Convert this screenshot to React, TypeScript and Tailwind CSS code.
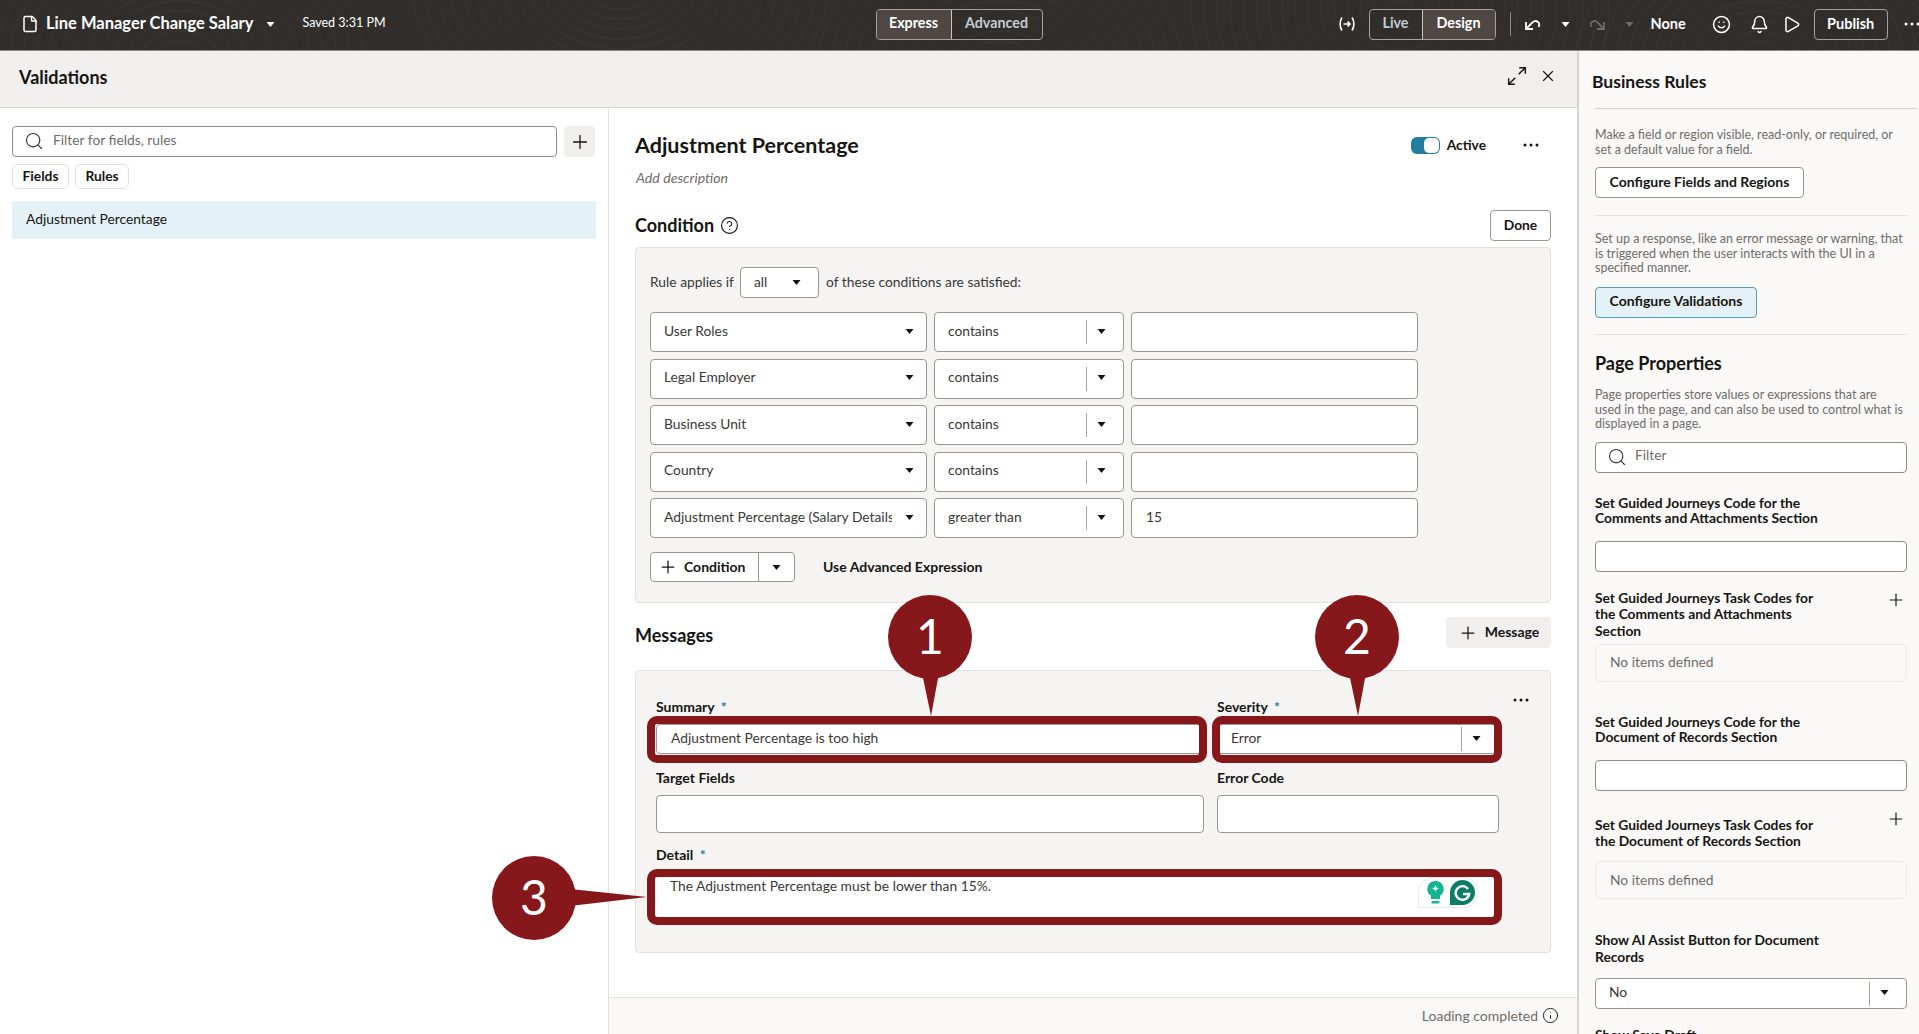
import { Search, Plus, X, File, Smile, Bell, Play, CircleHelp, Info } from 'lucide-react';

const conditionRows = [
  { field: 'User Roles', op: 'contains', value: '' },
  { field: 'Legal Employer', op: 'contains', value: '' },
  { field: 'Business Unit', op: 'contains', value: '' },
  { field: 'Country', op: 'contains', value: '' },
  { field: 'Adjustment Percentage (Salary Details)', op: 'greater than', value: '15' },
];

// contour lines behind the top bar
const contours = [
  { cx: 180, cy: 60, n: 14 },
  { cx: 620, cy: -20, n: 16 },
  { cx: 1000, cy: 70, n: 14 },
  { cx: 1400, cy: 10, n: 16 },
  { cx: 1760, cy: 60, n: 14 },
];

function Caret({ className = 'text-[#161513]' }: { className?: string }) {
  return (
    <svg width="9" height="5" viewBox="0 0 9 5" className={`shrink-0 ${className}`}>
      <path d="M0.5 0h8L4.500 5z" fill="currentColor" />
    </svg>
  );
}

function Dots({ className = 'text-[#161513]' }: { className?: string }) {
  return (
    <svg width="16" height="4" viewBox="0 0 16 4" className={`shrink-0 ${className}`}>
      <circle cx="2" cy="2" r="1.5" fill="currentColor" />
      <circle cx="8" cy="2" r="1.5" fill="currentColor" />
      <circle cx="14" cy="2" r="1.5" fill="currentColor" />
    </svg>
  );
}

function ComboBox({ text, className = '' }: { text: string; className?: string }) {
  return (
    <div className={`flex items-center rounded-[4px] border border-[#9a9693] bg-white ${className}`}>
      <span className="mb-[2px] flex-1 pl-[13px] text-[#3a3835]">{text}</span>
      <span className="h-[24px] w-px bg-[#a8a5a1]" />
      <span className="mb-[2px] flex w-[36px] pl-[10px]">
        <Caret />
      </span>
    </div>
  );
}

function Callout({ className, points, cx, cy, label, w, h }: { className: string; points: string; cx: number; cy: number; label: string; w: number; h: number }) {
  return (
    <svg width={w} height={h} viewBox={`0 0 ${w} ${h}`} className={`absolute ${className}`}>
      <circle cx={cx} cy={cy} r="42" fill="#86181b" />
      <polygon points={points} fill="#86181b" />
      <text x={cx} y={cy + 17} textAnchor="middle" fontSize="48" fill="#fff" fontFamily="Lato, sans-serif">
        {label}
      </text>
    </svg>
  );
}

export default function App() {
  return (
    <div className="relative flex h-screen w-full flex-col overflow-hidden bg-white font-['Lato',sans-serif] text-[14px] text-[#161513]">
      {/* Top bar */}
      <header className="relative flex h-[51px] shrink-0 items-center overflow-hidden border-b border-[#8d8a86] bg-[#312d2a] text-white">
        <svg className="absolute inset-0 h-full w-full" fill="none" stroke="#ffffff" strokeOpacity="0.045">
          {contours.map((c) =>
            Array.from({ length: c.n }, (_, i) => (
              <ellipse key={`${c.cx}-${i}`} cx={c.cx} cy={c.cy} rx={14 + i * 13} ry={9 + i * 10} />
            )),
          )}
        </svg>
        <div className="relative flex h-full w-full items-center whitespace-nowrap pb-[2px]">
          <File size={18} strokeWidth={2} className="ml-[21px] shrink-0" />
          <span className="ml-[7px] shrink-0 pb-[1px] text-[16.5px] font-bold">Line Manager Change Salary</span>
          <Caret className="ml-[13px] text-white" />
          <span className="ml-[27px] shrink-0 pb-[2px] text-[12.5px]">Saved 3:31 PM</span>

          <div className="ml-[490px] flex h-[31px] shrink-0 overflow-hidden rounded-[4px] border border-[#a5a19d] text-[14.3px] font-bold">
            <span className="flex w-[75px] items-center justify-center border-r border-[#c9c6c2] bg-[#4f4842] pb-[2px]">Express</span>
            <span className="flex w-[90px] items-center justify-center pb-[2px] text-[#c4ccd2]">Advanced</span>
          </div>

          <svg width="18" height="16" viewBox="0 0 18 16" fill="none" stroke="#fff" strokeWidth="1.6" className="ml-[295px] shrink-0">
            <path d="M4 1.500C1.500 5 1.500 11 4 14.500M14 1.500c2.500 3.500 2.500 9.500 0 13M5.500 8h6.500M9.500 5.500 12 8l-2.500 2.500" />
          </svg>
          <div className="ml-[13px] flex h-[31px] shrink-0 overflow-hidden rounded-[4px] border border-[#a5a19d] text-[14.3px] font-bold">
            <span className="flex w-[52px] items-center justify-center pb-[2px] text-[#c4ccd2]">Live</span>
            <span className="flex w-[73px] items-center justify-center border-l border-[#c9c6c2] bg-[#4f4842] pb-[2px]">Design</span>
          </div>
          <span className="ml-[14px] h-[24px] w-px shrink-0 bg-[#8d8a86]" />
          <svg width="18" height="16" viewBox="0 0 18 16" fill="none" stroke="#fff" strokeWidth="1.8" className="ml-[13px] shrink-0">
            <path d="M2 6v7h7M2 13l6.500-6.500a3.700 3.700 0 1 1 6 4.500" />
          </svg>
          <Caret className="ml-[19px] text-white" />
          <svg width="18" height="16" viewBox="0 0 18 16" fill="none" stroke="#6f6c69" strokeWidth="1.8" className="ml-[18px] shrink-0">
            <path d="M16 6v7H9M16 13 9.500 6.500a3.700 3.700 0 1 0-6 4.500" />
          </svg>
          <Caret className="ml-[19px] text-[#6f6c69]" />
          <span className="ml-[17px] shrink-0 text-[14.5px] font-bold">None</span>
          <Smile size={19} strokeWidth={1.9} className="ml-[26px] shrink-0" />
          <Bell size={19} strokeWidth={1.9} className="ml-[19px] shrink-0" />
          <Play size={19} strokeWidth={1.9} className="ml-[13px] shrink-0" />
          <span className="ml-[13px] flex h-[31px] w-[74px] shrink-0 items-center justify-center rounded-[4px] border border-[#a5a19d] text-[14.5px] font-bold">Publish</span>
          <Dots className="ml-[16px] text-white" />
        </div>
      </header>

      <div className="flex min-h-0 flex-1">
        {/* Validations */}
        <div className="flex w-[1577px] shrink-0 flex-col">
          <div className="flex h-[57px] shrink-0 items-center justify-between border-b border-[#d6d3cf] bg-[#f1efed] pl-[19px] pr-[20px]">
            <h1 className="mt-[-3px] text-[18px] font-bold">Validations</h1>
            <div className="mb-[6px] flex items-center gap-[12px]">
              <svg width="20" height="20" viewBox="0 0 18 18" fill="none" stroke="#161513" strokeWidth="1.3">
                <path d="M10.500 7.500 16.500 1.500M11 1.500h5.500V7M7.500 10.500l-6 6M1.500 11v5.500H7" />
              </svg>
              <X size={18} strokeWidth={1.5} />
            </div>
          </div>

          <div className="flex min-h-0 flex-1">
            {/* Left list */}
            <aside className="w-[609px] shrink-0 border-r border-[#e4e1dd] pl-[12px] pt-[18px]">
              <div className="flex gap-[7px]">
                <div className="flex h-[31px] w-[545px] items-center rounded-[4px] border border-[#8f8b87] bg-white pl-[11px] text-[#6f6c69]">
                  <Search size={20} strokeWidth={1.4} className="mb-[2px] text-[#3a3835]" />
                  <span className="mb-[2px] ml-[9px] text-[13.8px]">Filter for fields, rules</span>
                </div>
                <button className="flex h-[31px] w-[31px] items-center justify-center rounded-[4px] bg-[#f1efed]">
                  <Plus size={22} strokeWidth={1.4} />
                </button>
              </div>
              <div className="mt-[7px] flex gap-[6px] text-[13.8px] font-bold">
                <span className="flex h-[25px] w-[57px] items-center justify-center rounded-[6px] border border-[#e4e1dd]">Fields</span>
                <span className="flex h-[25px] w-[54px] items-center justify-center rounded-[6px] border border-[#e4e1dd]">Rules</span>
              </div>
              <div className="mt-[12px] flex h-[38px] w-[584px] items-center rounded-[3px] bg-[#e4f1f7] pl-[14px] text-[13.8px]">
                <span className="mb-[2px]">Adjustment Percentage</span>
              </div>
            </aside>

            {/* Rule editor */}
            <main className="flex min-w-0 flex-1 flex-col">
              <div className="flex-1 px-[26px]">
                <div className="mt-[22px] flex h-[30px] items-center">
                  <h2 className="flex-1 text-[21.5px] font-bold">Adjustment Percentage</h2>
                  <span className="flex h-[17px] w-[29px] items-center justify-end rounded-[6px] bg-[#227e9e] pr-[1px]">
                    <span className="h-[15px] w-[15px] rounded-[5px] bg-white" />
                  </span>
                  <span className="ml-[7px] text-[13.8px] font-bold">Active</span>
                  <Dots className="ml-[37px] mr-[12px]" />
                </div>
                <p className="ml-[1px] mt-[7px] h-[21px] text-[14.2px] italic text-[#6f6c69]">Add description</p>

                <div className="mt-[22px] flex h-[31px] items-center justify-between">
                  <div className="flex items-center gap-[6px]">
                    <h3 className="text-[18px] font-bold">Condition</h3>
                    <CircleHelp size={19} strokeWidth={1.4} />
                  </div>
                  <button className="flex h-[31px] w-[61px] items-center justify-center rounded-[4px] border border-[#9a9693] bg-white text-[13.8px] font-bold">Done</button>
                </div>

                <section className="mt-[6px] h-[356px] rounded-[4px] border border-[#e4e1dd] bg-[#f5f4f2] pl-[14px] pt-[19px] text-[13.8px]">
                  <div className="flex h-[31px] items-center text-[#3a3835]">
                    <span>Rule applies if</span>
                    <div className="ml-[6px] flex h-[31px] w-[79px] items-center rounded-[4px] border border-[#9a9693] bg-white pl-[13px]">
                      <span className="flex-1">all</span>
                      <Caret className="mr-[17px] text-[#161513]" />
                    </div>
                    <span className="ml-[7px]">of these conditions are satisfied:</span>
                  </div>

                  <div className="mt-[14px] flex flex-col gap-[6.5px]">
                    {conditionRows.map((row) => (
                      <div key={row.field} className="flex h-[40px] gap-[7px]">
                        <div className="flex w-[277px] items-center rounded-[4px] border border-[#9a9693] bg-white pl-[13px]">
                          <span className="mb-[2px] w-[228px] overflow-hidden whitespace-nowrap text-[#3a3835]">{row.field}</span>
                          <Caret className="mb-[2px] ml-[13px]" />
                        </div>
                        <ComboBox text={row.op} className="w-[190px]" />
                        <div className="flex w-[287px] items-center rounded-[4px] border border-[#9a9693] bg-white pl-[14px] text-[#3a3835]">
                          <span className="mb-[2px]">{row.value}</span>
                        </div>
                      </div>
                    ))}
                  </div>

                  <div className="mt-[14px] flex items-center">
                    <div className="flex h-[30px] w-[145px] items-center rounded-[4px] border border-[#9a9693] bg-white text-[14px] font-bold">
                      <Plus size={20} strokeWidth={1.5} className="ml-[7px]" />
                      <span className="mb-[2px] ml-[6px] w-[74px]">Condition</span>
                      <span className="flex h-full flex-1 items-center justify-center border-l border-[#9a9693]">
                        <Caret />
                      </span>
                    </div>
                    <span className="mb-[2px] ml-[28px] text-[14px] font-bold">Use Advanced Expression</span>
                  </div>
                </section>

                <div className="mt-[14px] flex h-[31px] items-center justify-between">
                  <h3 className="mt-[6px] text-[18px] font-bold">Messages</h3>
                  <button className="flex h-[31px] w-[105px] items-center justify-center gap-[7px] rounded-[4px] bg-[#f1efed] text-[14px] font-bold">
                    <Plus size={20} strokeWidth={1.5} />
                    <span className="mb-[2px]">Message</span>
                  </button>
                </div>

                <section className="relative mt-[22px] h-[283px] rounded-[4px] border border-[#e4e1dd] bg-[#f5f4f2] pl-[20px] pt-[25px] text-[13.8px]">
                  <Dots className="absolute right-[21px] top-[27px]" />
                  <div className="grid grid-cols-[548px_282px] gap-x-[13px]">
                    <label className="h-[18px] text-[14px] font-bold">
                      Summary <span className="ml-[3px] text-[#227e9e]">*</span>
                    </label>
                    <label className="h-[18px] text-[14px] font-bold">
                      Severity <span className="ml-[3px] text-[#227e9e]">*</span>
                    </label>
                    <div className="mt-[10px] flex h-[30px] items-center rounded-[4px] border border-[#9a9693] bg-white pl-[14px] text-[#3a3835]">
                      <span className="mb-[2px]">Adjustment Percentage is too high</span>
                    </div>
                    <ComboBox text="Error" className="mt-[10px] h-[30px]" />
                    <label className="mt-[13px] h-[18px] text-[14px] font-bold">Target Fields</label>
                    <label className="mt-[13px] h-[18px] text-[14px] font-bold">Error Code</label>
                    <div className="mt-[10px] h-[38px] rounded-[4px] border border-[#9a9693] bg-white" />
                    <div className="mt-[10px] h-[38px] rounded-[4px] border border-[#9a9693] bg-white" />
                  </div>
                  <label className="mt-[11px] block h-[18px] text-[14px] font-bold">
                    Detail <span className="ml-[3px] text-[#227e9e]">*</span>
                  </label>
                  <div className="relative mt-[15px] h-[40px] w-[838px] rounded-[4px] bg-white pl-[14px] leading-[17px] text-[#3a3835]">
                    The Adjustment Percentage must be lower than 15%.
                    {/* writing assistant badge */}
                    <div className="absolute left-[762px] top-0 flex h-[31px] w-[61px] items-center gap-[6px] rounded-r-[16px] rounded-tl-[16px] border border-[#e4e9ec] bg-white pl-[8px]">
                      <svg width="17" height="24" viewBox="0 0 17 24">
                        <path d="M8.500 0a8 8 0 0 1 4.500 14.700V18H4v-3.300A8 8 0 0 1 8.500 0z" fill="#11b592" />
                        <path d="M8.500 4c.5 2.200 1.300 3 3.500 3.500-2.200.5-3 1.300-3.500 3.500-.5-2.200-1.300-3-3.500-3.500C7.200 7 8 6.200 8.500 4z" fill="#fff" />
                        <rect x="4.500" y="20" width="8" height="2.500" rx="1" fill="#11b592" />
                      </svg>
                      <svg width="25" height="25" viewBox="0 0 25 25">
                        <path d="M12.500 0a12.500 12.500 0 1 1 0 25H0V12.500A12.500 12.500 0 0 1 12.500 0z" fill="#0c7d66" />
                        <path d="M18 9a6.800 6.800 0 1 0 1.200 5H13" fill="none" stroke="#fff" strokeWidth="2.400" />
                      </svg>
                    </div>
                  </div>
                </section>
              </div>

              <footer className="flex h-[37px] shrink-0 items-center justify-end gap-[4px] border-t border-[#e4e1dd] bg-[#f9f8f6] pb-[2px] pr-[18px] text-[14px] text-[#6f6c69]">
                Loading completed
                <Info size={17} strokeWidth={1.3} className="text-[#161513]" />
              </footer>
            </main>
          </div>
        </div>

        {/* Right panel */}
        <aside className="min-w-0 flex-1 overflow-hidden border-l-2 border-[#d6d3cf] bg-[#fbf9f8] pl-[16px] text-[12.5px] leading-[14.5px]">
          <h2 className="ml-[-3px] mt-[19px] h-[24px] text-[17.5px] font-bold leading-[24px]">Business Rules</h2>
          <div className="mt-[14px] h-px w-[322px] bg-[#d6d3cf]" />
          <p className="mt-[19px] text-[#6f6c69]">
            Make a field or region visible, read-only, or required, or
            <br />
            set a default value for a field.
          </p>
          <button className="mt-[10px] flex h-[31px] w-[209px] items-center justify-center rounded-[4px] border border-[#9a9693] bg-white text-[14px] font-bold">
            <span className="mb-[1px]">Configure Fields and Regions</span>
          </button>
          <div className="mt-[17px] h-px w-[312px] bg-[#e4e1dd]" />
          <p className="mt-[16px] text-[#6f6c69]">
            Set up a response, like an error message or warning, that
            <br />
            is triggered when the user interacts with the UI in a
            <br />
            specified manner.
          </p>
          <button className="mt-[11.5px] flex h-[31px] w-[162px] items-center justify-center rounded-[4px] border border-[#5b9ab5] bg-[#e4f1f7] text-[14px] font-bold">
            <span className="mb-[2px]">Configure Validations</span>
          </button>
          <div className="mt-[16px] h-px w-[312px] bg-[#e4e1dd]" />
          <h2 className="mt-[16px] h-[24px] text-[18px] font-bold leading-[24px]">Page Properties</h2>
          <p className="mt-[13px] text-[#6f6c69]">
            Page properties store values or expressions that are
            <br />
            used in the page, and can also be used to control what is
            <br />
            displayed in a page.
          </p>
          <div className="mt-[10.5px] flex h-[31px] w-[312px] items-center rounded-[4px] border border-[#8f8b87] bg-white pl-[11px] text-[13.8px] text-[#6f6c69]">
            <Search size={20} strokeWidth={1.4} className="mb-[2px] text-[#3a3835]" />
            <span className="mb-[4px] ml-[8px]">Filter</span>
          </div>

          <h4 className="mt-[22px] text-[13.8px] font-bold leading-[15px]">
            Set Guided Journeys Code for the
            <br />
            Comments and Attachments Section
          </h4>
          <div className="mt-[16px] h-[31px] w-[312px] rounded-[4px] border border-[#8f8b87] bg-white" />

          <div className="mt-[18px] flex w-[312px] items-start justify-between">
            <h4 className="text-[13.8px] font-bold leading-[16.3px]">
              Set Guided Journeys Task Codes for
              <br />
              the Comments and Attachments
              <br />
              Section
            </h4>
            <Plus size={20} strokeWidth={1.4} className="mr-[1px]" />
          </div>
          <div className="mt-[5px] flex h-[38px] w-[312px] items-center rounded-[6px] border border-[#ece9e6] pl-[14px] text-[13.8px] text-[#6f6c69]">
            <span className="mb-[2px]">No items defined</span>
          </div>

          <h4 className="mt-[32px] text-[13.8px] font-bold leading-[15px]">
            Set Guided Journeys Code for the
            <br />
            Document of Records Section
          </h4>
          <div className="mt-[16px] h-[31px] w-[312px] rounded-[4px] border border-[#8f8b87] bg-white" />

          <div className="mt-[26px] flex w-[312px] items-start justify-between">
            <h4 className="text-[13.8px] font-bold leading-[16.3px]">
              Set Guided Journeys Task Codes for
              <br />
              the Document of Records Section
            </h4>
            <Plus size={20} strokeWidth={1.4} className="mr-[1px] mt-[-8px]" />
          </div>
          <div className="mt-[12px] flex h-[38px] w-[312px] items-center rounded-[6px] border border-[#ece9e6] pl-[14px] text-[13.8px] text-[#6f6c69]">No items defined</div>

          <h4 className="mt-[33px] text-[13.8px] font-bold leading-[16.3px]">
            Show AI Assist Button for Document
            <br />
            Records
          </h4>
          <ComboBox text="No" className="mt-[13px] h-[31px] w-[312px] text-[13.8px]" />
          <h4 className="mt-[18px] text-[13.8px] font-bold leading-[16.3px]">Show Save Draft</h4>
        </aside>
      </div>

      {/* Numbered callouts over the form */}
      <div className="absolute left-[647px] top-[716px] h-[47px] w-[560px] rounded-[10px] border-8 border-[#86181b]" />
      <div className="absolute left-[1212px] top-[716px] h-[47px] w-[290px] rounded-[10px] border-8 border-[#86181b]" />
      <div className="absolute left-[647px] top-[869px] h-[56px] w-[855px] rounded-[10px] border-8 border-[#86181b]" />
      <Callout className="left-[888px] top-[595px]" w={84} h={122} cx={42} cy={42} points="34,78 51,78 43,121" label="1" />
      <Callout className="left-[1315px] top-[595px]" w={84} h={122} cx={42} cy={42} points="34,78 51,78 43,121" label="2" />
      <Callout className="left-[492px] top-[856px]" w={156} h={84} cx={42} cy={42} points="78,33 78,50 155,41" label="3" />
    </div>
  );
}
